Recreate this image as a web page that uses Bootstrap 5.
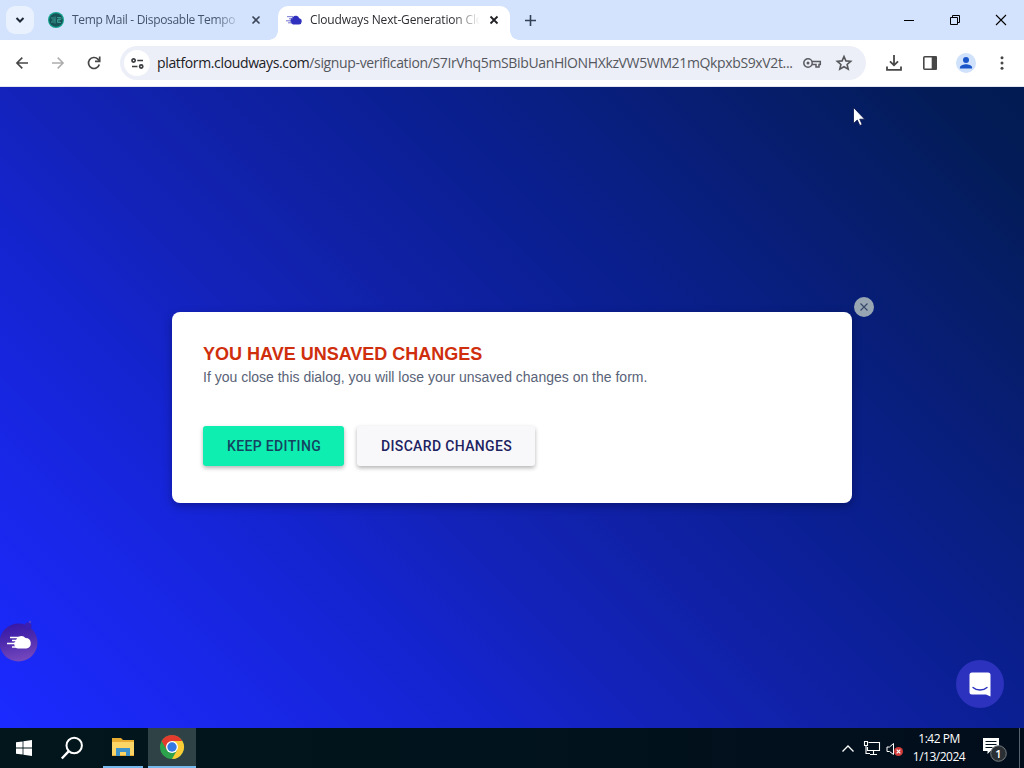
<!DOCTYPE html>
<html lang="en">
<head>
    <meta charset="UTF-8">
    <meta name="viewport" content="width=device-width, initial-scale=1.0">
    <title>Cloudways Next-Generation Cloud</title>
    <link href="https://cdn.jsdelivr.net/npm/bootstrap@5.3.0/dist/css/bootstrap.min.css" rel="stylesheet">
    <style>
        body { width: 1024px; height: 768px; font-family: "Open Sans", "Noto Sans", sans-serif; }
        svg { display: block; flex-shrink: 0; overflow: visible; }

        /* tab strip */
        .tab-strip { height: 40px; background: #d3e3fd; padding-left: 6px; }
        .tab-search { width: 28px; height: 28px; border-radius: 9px; background: #e9f1fe; }
        .browser-tab { position: relative; height: 34px; padding-bottom: 7px; font-size: 12px; color: #44546c; }
        .tab-one { width: 238px; padding-left: 14px; padding-right: 8px; }
        .tab-two { width: 232px; margin-left: 6px; padding-left: 8px; padding-right: 8px; background: #fff; border-radius: 10px 10px 0 0; color: #2b2d31; }
        .tab-two::before, .tab-two::after { content: ""; position: absolute; bottom: 0; width: 9px; height: 9px; }
        .tab-two::before { left: -9px; background: radial-gradient(circle at 0 0, transparent 8.5px, #fff 9px); }
        .tab-two::after { right: -9px; background: radial-gradient(circle at 100% 0, transparent 8.5px, #fff 9px); }
        .tab-title { width: 170px; white-space: nowrap; line-height: 18px; letter-spacing: -.32px;
            -webkit-mask-image: linear-gradient(90deg, #000 84%, transparent 100%); mask-image: linear-gradient(90deg, #000 84%, transparent 100%); }
        .tab-two .tab-title { letter-spacing: -.16px; }
        .new-tab { width: 40px; height: 40px; }
        .win-btn { width: 46px; height: 40px; }

        /* toolbar */
        .toolbar { height: 47px; background: #fff; border-bottom: 1px solid #e3e6ee; padding: 0 4px; }
        .tool-btn { width: 36px; height: 36px; }
        .omnibox { width: 746px; height: 34px; border-radius: 17px; background: #edeff8; margin-left: 8px; padding: 0 6px 0 4px; }
        .site-info { width: 26px; height: 26px; border-radius: 50%; background: #fff; }
        .url-text { width: 638px; margin-left: 7px; font-size: 14px; line-height: 20px; white-space: nowrap; color: #54575d; letter-spacing: -.36px; }
        .url-text b { font-weight: 400; color: #202124; }
        .profile { width: 20px; height: 20px; border-radius: 50%; background: #cfe1fb; overflow: hidden; }

        /* page */
        .page-area { position: relative; height: 641px; padding-top: 225px;
            background: linear-gradient(45deg, #1b2aff 0%, #1927ea 15%, #1424cc 31%, #1323ba 39%, #1021a6 50%, #0b1f94 61%, #091f84 70%, #061d6b 84%, #031c58 94%, #021b52 100%);
            font-family: "Liberation Sans", Arial, sans-serif; }
        .unsaved-dialog { position: relative; width: 680px; height: 191px; padding: 31px; border-radius: 8px; background: #fff;
            box-shadow: 0 3px 8px rgba(0, 0, 40, .35); }
        .dialog-close { position: absolute; left: 682px; top: -15px; width: 20px; height: 20px; border-radius: 50%; background: #98a5b3; }
        .dialog-title { font-size: 18px; line-height: 22px; font-weight: 700; color: #cf2f0d; }
        .dialog-text { font-size: 14px; line-height: 24px; color: #596377; }
        .dialog-btns { margin-top: 37px; gap: 13px; }
        .dialog-btns .btn { height: 40px; padding: 0 24px; border: 0; border-radius: 3px; font-family: Roboto, sans-serif; font-weight: 500; font-size: 14px;
            line-height: 41px; text-align: left; color: #1d2361; letter-spacing: .35px; box-shadow: 0 2px 4px rgba(0, 0, 0, .3); }
        .dialog-btns .btn-keep { background: #0eeeb0; color: #14445f; width: 141px; }
        .dialog-btns .btn-discard { background: #f8f8fa; width: 178px; }
        .cloud-bubble { position: absolute; left: 0; top: 532px; }
        .chat-bubble { position: absolute; left: 956px; top: 573px; width: 48px; height: 48px; border-radius: 50%; background: #2c32bd; }
        .pointer { position: absolute; left: 853px; top: 20px; }

        /* taskbar */
        .taskbar { height: 40px; background: linear-gradient(90deg, #02161c, #01131c 50%, #020d1c); color: #fff; }
        .task-btn { width: 48px; height: 40px; }
        .task-running { border-bottom: 2px solid #76b9ed; width: 40px; margin: 0 5px 0 7px; }
        .task-active { border-bottom: 2px solid #76b9ed; background: #2f4347; }
        .tray-network { margin: 0 5px 0 9px; }
        .tray-sound { margin: 4px 5px 0 0; }
        .tray-clock { width: 60px; font-size: 12px; line-height: 18px; letter-spacing: -.5px; white-space: nowrap; }
        .tray-notes { margin: 8px 11px 0 14px; }
        .show-desktop { width: 5px; border-left: 1px solid #59636b; }
    </style>
</head>
<body class="overflow-hidden">
    <div class="tab-strip d-flex align-items-end">
        <div class="tab-search d-flex align-items-center justify-content-center align-self-center">
            <svg width="10" height="6" fill="none" stroke="#1f2937" stroke-width="2"><path d="M1.500 1 5 4.500 8.500 1"/></svg>
        </div>
        <div class="browser-tab tab-one d-flex align-items-center">
            <svg width="16" height="16"><circle cx="8" cy="8" r="8" fill="#17a38e"/><circle cx="8" cy="8" r="6.800" fill="#175258"/><path d="M3 6h3M4 8h3M3 10h3M7 4.500v7M9 5.500h4v2H9.500v3H13M11 6v4" fill="none" stroke="#3a9b91"/></svg>
            <div class="tab-title ms-2">Temp Mail - Disposable Tempo</div>
            <svg width="8" height="8" class="ms-auto me-1" stroke="#3c4658" stroke-width="1.600"><path d="M.5.5l7 7M7.500.5l-7 7"/></svg>
        </div>
        <div class="browser-tab tab-two d-flex align-items-center">
            <svg width="16" height="12" fill="#2f30bd"><path d="M7 10.500a4 4 0 0 1 0-7.500 3.700 3.700 0 0 1 6.200 1.200A3.200 3.200 0 0 1 13 10.500z"/><path d="M1 2.700h6M3 4.800h4M0 6.800h5M2 8.800h4" stroke="#6263cb" stroke-width=".9"/></svg>
            <div class="tab-title ms-2">Cloudways Next-Generation Clo</div>
            <svg width="8" height="8" class="ms-auto me-1" stroke="#202124" stroke-width="1.800"><path d="M.5.5l7 7M7.500.5l-7 7"/></svg>
        </div>
        <div class="new-tab d-flex align-items-center justify-content-center">
            <svg width="11" height="11" stroke="#344257" stroke-width="1.600"><path d="M5.500 0v11M0 5.500h11"/></svg>
        </div>
        <div class="d-flex ms-auto">
            <div class="win-btn d-flex align-items-center justify-content-center">
                <svg width="10" height="10" stroke="#000"><path d="M0 5.500h10"/></svg>
            </div>
            <div class="win-btn d-flex align-items-center justify-content-center">
                <svg width="10" height="10" fill="none" stroke="#000"><path d="M.5 2.500h7v7h-7zM2.500 2.500V.5h7v7h-2"/></svg>
            </div>
            <div class="win-btn d-flex align-items-center justify-content-center">
                <svg width="10" height="10" stroke="#000" stroke-width="1.100"><path d="M0 0l10 10M10 0 0 10"/></svg>
            </div>
        </div>
    </div>

    <div class="toolbar d-flex align-items-center">
        <div class="tool-btn d-flex align-items-center justify-content-center">
            <svg width="12" height="12" fill="none" stroke="#474747" stroke-width="1.600"><path d="M12 6H1M6.300.6.9 6l5.400 5.400"/></svg>
        </div>
        <div class="tool-btn d-flex align-items-center justify-content-center">
            <svg width="12" height="12" fill="none" stroke="#adadad" stroke-width="1.500"><path d="M0 6h11M5.700.6 11.100 6l-5.400 5.400"/></svg>
        </div>
        <div class="tool-btn d-flex align-items-center justify-content-center">
            <svg width="14" height="14" fill="none" stroke="#474747" stroke-width="1.700"><path d="M12.300 8.500A5.500 5.500 0 1 1 10.900 3.100L12.700 5"/><path d="M12.700.5v4.800H8"/></svg>
        </div>
        <div class="omnibox d-flex align-items-center">
            <div class="site-info d-flex align-items-center justify-content-center">
                <svg width="13" height="11" fill="none" stroke="#3c3d40" stroke-width="1.700"><circle cx="2.600" cy="2.500" r="1.600"/><path d="M6.300 2.500H12M1 8.500h5.500"/><circle cx="10.200" cy="8.500" r="1.600"/></svg>
            </div>
            <div class="url-text"><b>platform.cloudways.com</b>/signup-verification/S7IrVhq5mSBibUanHlONHXkzVW5WM21mQkpxbS9xV2t...</div>
            <svg width="18" height="10" class="ms-2" fill="none" stroke="#5b5c61" stroke-width="1.500"><circle cx="5" cy="5" r="4.200"/><circle cx="5" cy="5" r="1.500" fill="#5b5c61" stroke="none"/><path d="M9 3.500h8.300v3h-1.300v2.500h-3V6.500H9"/></svg>
            <svg width="16" height="16" class="ms-auto me-2" fill="none" stroke="#54565a" stroke-width="1.600"><path d="M8 1.500l1.900 4.400 4.800.4-3.600 3.200 1.100 4.700L8 11.700l-4.200 2.500 1.100-4.700L1.300 6.300l4.800-.4z"/></svg>
        </div>
        <div class="d-flex ms-auto">
            <div class="tool-btn d-flex align-items-center justify-content-center">
                <svg width="16" height="16" fill="none" stroke="#474747" stroke-width="1.800"><path d="M8 0v10M4 6.300l4 4 4-4M1 11.500v3.400h14v-3.400"/></svg>
            </div>
            <div class="tool-btn d-flex align-items-center justify-content-center">
                <svg width="14" height="14" fill="none" stroke="#474747" stroke-width="1.600"><rect x=".8" y=".8" width="12.400" height="12.400" rx="1"/><path d="M9.500 1h3.500v12H9.500z" fill="#474747"/></svg>
            </div>
            <div class="tool-btn d-flex align-items-center justify-content-center">
                <div class="profile"><svg width="20" height="20" fill="#1a56c9"><circle cx="10" cy="7" r="3"/><path d="M4 15.500v-1.300c0-2 4-3 6-3s6 1 6 3v1.300z"/></svg></div>
            </div>
            <div class="tool-btn d-flex align-items-center justify-content-center">
                <svg width="4" height="14" fill="#474747"><circle cx="2" cy="1.700" r="1.500"/><circle cx="2" cy="7" r="1.500"/><circle cx="2" cy="12.300" r="1.500"/></svg>
            </div>
        </div>
    </div>

    <main class="page-area">
        <div class="unsaved-dialog mx-auto">
            <div class="dialog-close d-flex align-items-center justify-content-center">
                <svg width="8" height="8" stroke="#354668" stroke-width="1.100"><path d="M.5.5l7 7M7.500.5l-7 7"/></svg>
            </div>
            <h1 class="dialog-title m-0">YOU HAVE UNSAVED CHANGES</h1>
            <p class="dialog-text m-0">If you close this dialog, you will lose your unsaved changes on the form.</p>
            <div class="dialog-btns d-flex">
                <button type="button" class="btn btn-keep text-nowrap">KEEP EDITING</button>
                <button type="button" class="btn btn-discard text-nowrap">DISCARD CHANGES</button>
            </div>
        </div>
        <svg class="cloud-bubble" width="42" height="46">
            <defs><linearGradient id="bubble" x1=".2" y1="0" x2=".4" y2="1"><stop offset="0" stop-color="#3516a6"/><stop offset=".45" stop-color="#4c2aae"/><stop offset="1" stop-color="#7547bd"/></linearGradient></defs>
            <circle cx="18.500" cy="23.500" r="19" fill="url(#bubble)"/>
            <circle cx="28" cy="7" r="3.500" fill="#3a1fb0"/><circle cx="30" cy="3" r="1.200" fill="#5140d0"/>
            <path d="M18 29.500a4.500 4.500 0 0 1-2-8 5.500 5.500 0 0 1 9.500-2.500A5.300 5.300 0 0 1 26.500 29.500z" fill="#fff"/>
            <path d="M10 18.500h9M12 21.500h6M7 24.500h9M12 28h6" stroke="#fff" stroke-width="1.500"/>
        </svg>
        <div class="chat-bubble d-flex align-items-center justify-content-center">
            <svg width="22" height="25"><path d="M3 .5h16a2.500 2.500 0 0 1 2.500 2.500v21.500L17 22.500H3A2.500 2.500 0 0 1 .5 20V3A2.500 2.500 0 0 1 3 .5z" fill="#fff"/><path d="M4 15.500c3.500 3.300 10.500 3.300 14 0" fill="none" stroke="#2c32bd" stroke-width="1.400" stroke-linecap="round"/></svg>
        </div>
        <svg class="pointer" width="12" height="19"><path d="M.5.500v16l3.800-3.500 2.500 5.500 2.400-1-2.500-5.300h5z" fill="#fff" stroke="#07124a" stroke-width=".8"/></svg>
    </main>

    <footer class="taskbar d-flex align-items-stretch">
        <div class="task-btn d-flex align-items-center justify-content-center">
            <svg width="16" height="16" fill="#fff"><path d="M0 2.300l6.600-.9v6.200H0zM7.400 1.300 16 0v7.600H7.400zM0 8.400h6.600v6.200L0 13.700zM7.400 8.400H16V16l-8.600-1.200z"/></svg>
        </div>
        <div class="task-btn d-flex align-items-center justify-content-center">
            <svg width="22" height="22" fill="none" stroke="#fff" stroke-width="2"><circle cx="13.200" cy="8.500" r="7.700"/><path d="M7.800 14.200.8 21.500" stroke-width="2.400"/></svg>
        </div>
        <div class="task-btn task-running d-flex align-items-center justify-content-center">
            <svg width="22" height="18"><path d="M0 0h9l2 2h11v16H0z" fill="#e9ad31"/><path d="M0 4h22v13H0z" fill="#fbd566"/><path d="M4 18V10h14v8h-4v-4H8v4z" fill="#3e93ca"/></svg>
        </div>
        <div class="task-btn task-active d-flex align-items-center justify-content-center">
            <svg width="24" height="24" viewBox="-12 -12 24 24"><circle r="12" fill="#2da24c"/><path d="M0-6H10.400A12 12 0 0 1 0 12L5.200 3z" fill="#fccb35"/><path d="M-10.400-6A12 12 0 0 1 10.400-6H0L-5.200 3z" fill="#e33b2e"/><circle r="6" fill="#fff"/><circle r="4.700" fill="#3478e5"/></svg>
        </div>
        <div class="d-flex ms-auto align-items-center">
            <svg width="12" height="7" fill="none" stroke="#fff" stroke-width="1.300"><path d="M.5 6.500 6 1l5.500 5.500"/></svg>
            <svg width="18" height="14" class="tray-network" fill="none" stroke="#fff" stroke-width="1.100"><path d="M5.500 1.500h11v8H4.500V6M10.500 9.500v3.500M7 13.500h7M1.500.5h3v4h-3zM3 5v7.500h4"/></svg>
            <svg width="18" height="16" class="tray-sound"><path d="M1 5h2.500L7.500 1.500v11L3.500 9.500H1z" fill="none" stroke="#fff"/><circle cx="12.500" cy="9.500" r="4.500" fill="#d23a3a"/><path d="M10.700 7.700l3.600 3.600M14.300 7.700l-3.600 3.600" stroke="#fff" stroke-width="1.200"/></svg>
            <div class="tray-clock text-center">1:42 PM<br>1/13/2024</div>
            <svg width="25" height="28" class="tray-notes"><path d="M0 0h16v13h-8.500l-3 3v-3H0z" fill="#fff"/><path d="M2.500 3.500h11M2.500 6.500h11M2.500 9.500h7" stroke="#02121c"/><circle cx="15.500" cy="15.500" r="7.800" fill="#2a2f34" stroke="#777c80"/><text x="15.500" y="19.500" fill="#fff" font-size="11" font-weight="600" text-anchor="middle">1</text></svg>
            <div class="show-desktop align-self-stretch"></div>
        </div>
    </footer>
    <script src="https://cdn.jsdelivr.net/npm/bootstrap@5.3.0/dist/js/bootstrap.bundle.min.js"></script>
</body>
</html>
